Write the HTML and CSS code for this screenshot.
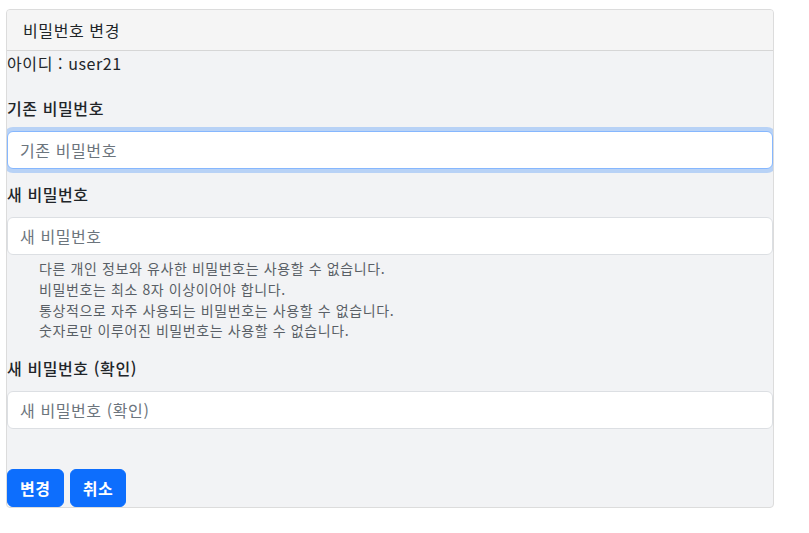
FILE: index.html
```html
<!DOCTYPE html>
<html lang="ko">
<head>
<meta charset="utf-8">
<title>비밀번호 변경</title>
<link rel="stylesheet" href="styles.css">
</head>
<body>
<div class="page">
  <div class="card">
    <div class="card-header">비밀번호 변경</div>
    <div class="card-body">
      <div class="user-id">아이디 : user21</div>

      <div class="field field-old">
        <label class="label" for="old">기존 비밀번호</label>
        <input class="input focused" id="old" type="password" placeholder="기존 비밀번호">
      </div>

      <div class="field field-new">
        <label class="label" for="new">새 비밀번호</label>
        <input class="input" id="new" type="password" placeholder="새 비밀번호">
        <ul class="help">
          <li>다른 개인 정보와 유사한 비밀번호는 사용할 수 없습니다.</li>
          <li>비밀번호는 최소 8자 이상이어야 합니다.</li>
          <li>통상적으로 자주 사용되는 비밀번호는 사용할 수 없습니다.</li>
          <li>숫자로만 이루어진 비밀번호는 사용할 수 없습니다.</li>
        </ul>
      </div>

      <div class="field field-confirm">
        <label class="label" for="confirm">새 비밀번호 (확인)</label>
        <input class="input" id="confirm" type="password" placeholder="새 비밀번호 (확인)">
      </div>

      <div class="actions">
        <button class="btn" type="button">변경</button>
        <button class="btn" type="button">취소</button>
      </div>
    </div>
  </div>
</div>
</body>
</html>
```

FILE: styles.css
```css
* { box-sizing: border-box; }

html, body {
  margin: 0;
  padding: 0;
  background: #ffffff;
}

body {
  font-family: "Noto Sans CJK KR", "Noto Sans", sans-serif;
  font-size: 16px;
  line-height: 1.5;
  letter-spacing: 0.6px;
  color: #212529;
}

.page {
  padding: 9px 35px 0 6px;
}

.card {
  border: 1px solid #dcdcdc;
  border-radius: 4px;
  overflow: hidden;
  background: #f2f3f5;
}

.card-header {
  padding: 8px 16px;
  background: #f5f5f5;
  border-bottom: 1px solid #d6d6d6;
  line-height: 24px;
}

.card-body {
  display: flex;
  flex-direction: column;
}

.user-id {
  line-height: 24px;
}

.field {
  display: flex;
  flex-direction: column;
}

.field-old {
  margin-top: 21px;
}

.field-new {
  margin-top: 13px;
}

.field-confirm {
  margin-top: 15px;
}

.label {
  display: block;
  font-weight: 500;
  line-height: 24px;
  margin-bottom: 11px;
}

.input {
  display: block;
  width: 100%;
  height: 38px;
  padding: 6px 12px;
  font-family: inherit;
  font-size: 16px;
  letter-spacing: 0.6px;
  line-height: 24px;
  color: #212529;
  background: #ffffff;
  border: 1px solid #dcdfe3;
  border-radius: 6px;
  outline: none;
}

.input::placeholder {
  color: #6c757d;
}

.input.focused {
  border-color: #86b7fe;
  box-shadow: 0 0 0 4px rgba(13, 110, 253, 0.25);
}

.help {
  list-style: none;
  margin: 3px 0 0;
  padding: 0 0 0 32px;
  font-size: 14px;
  line-height: 20.8px;
  color: #595f66;
}

.actions {
  display: flex;
  gap: 6px;
  margin-top: 40px;
}

.btn {
  height: 38px;
  padding: 6px 12px;
  font-family: inherit;
  font-size: 16px;
  font-weight: 700;
  letter-spacing: 0.6px;
  line-height: 24px;
  color: #ffffff;
  background: #0d6efd;
  border: 1px solid #0d6efd;
  border-radius: 6px;
  cursor: pointer;
}
```
